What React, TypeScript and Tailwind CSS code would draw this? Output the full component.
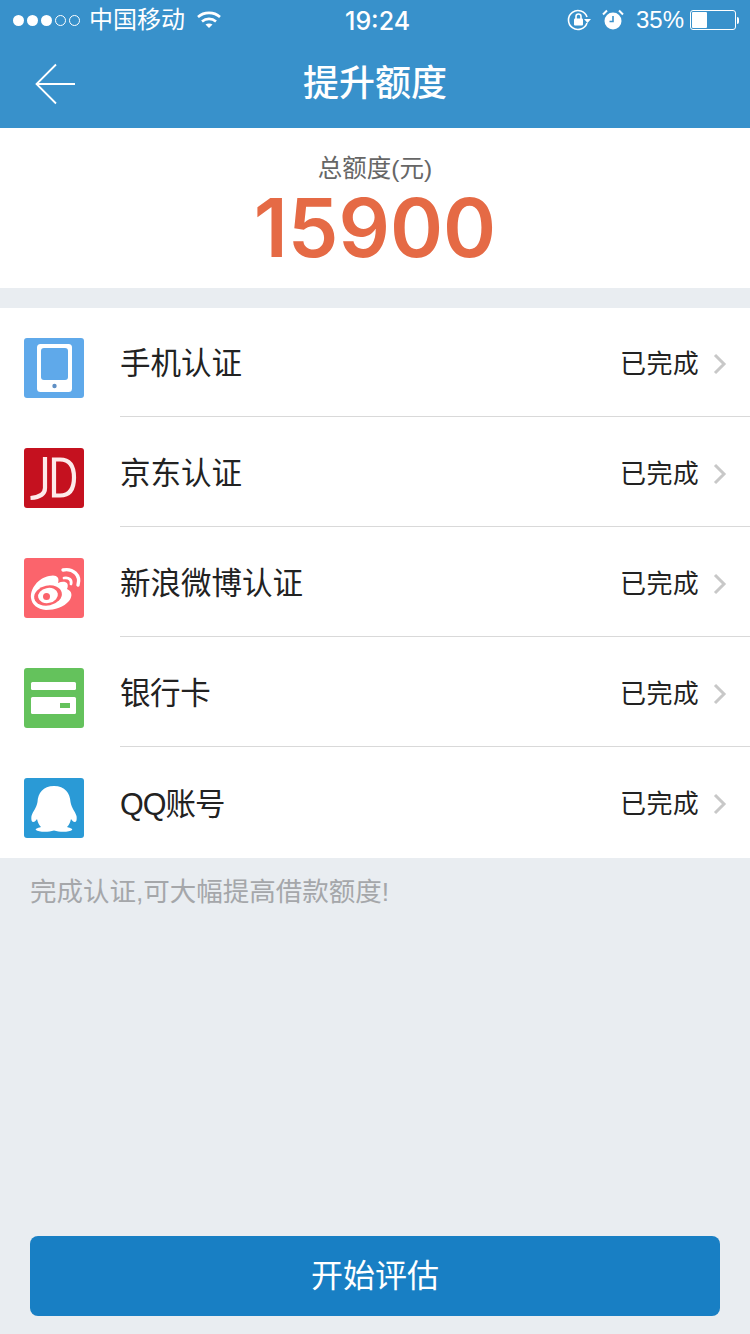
import type { ReactNode } from "react";

const cjk = "font-['Helvetica_Neue','Liberation_Sans','Noto_Sans_CJK_SC',sans-serif]";

function PhoneIcon() {
  return (
    <svg viewBox="0 0 60 60" className="h-[60px] w-[60px]">
      <rect width="60" height="60" rx="3" fill="#5fa9ea" />
      <rect x="13" y="6" width="35" height="48" rx="3.5" fill="#fff" />
      <rect x="17" y="10" width="27" height="32" rx="3" fill="#5fa9ea" />
      <circle cx="30.5" cy="48" r="2.2" fill="#5f8fc4" />
    </svg>
  );
}

function JdIcon() {
  return (
    <svg viewBox="0 0 60 60" className="h-[60px] w-[60px]">
      <rect width="60" height="60" rx="3" fill="#c5111f" />
      <path d="M21 9V40Q21 49 6.5 50" fill="none" stroke="#fdeaea" strokeWidth="4.2" />
      <path d="M30 11.5H36Q50 11.5 50 29.5T36 47.5H30Z" fill="none" stroke="#fdeaea" strokeWidth="4.2" />
    </svg>
  );
}

function WeiboIcon() {
  return (
    <svg viewBox="0 0 60 60" className="h-[60px] w-[60px]">
      <rect width="60" height="60" rx="3" fill="#fb646c" />
      <path
        d="M7 40C6 31 14 20 25 18C32 16 36 19 34 25C40 22 46 24 43 31C48 33 49 38 45 43C40 49 31 52 22 52C13 51 8 47 7 40Z"
        fill="#fff"
      />
      <ellipse cx="24" cy="37.5" rx="14" ry="10" fill="#fb646c" transform="rotate(-12 24 37.5)" />
      <ellipse cx="24" cy="37.5" rx="10" ry="7.5" fill="#fff" transform="rotate(-12 24 37.5)" />
      <circle cx="22.5" cy="38.5" r="3.5" fill="#fb646c" />
      <path d="M40 20C45 19 48 22 47 26" fill="none" stroke="#fff" strokeWidth="2.8" strokeLinecap="round" />
      <path d="M39 12C49 10 57 17 54 27" fill="none" stroke="#fff" strokeWidth="3.4" strokeLinecap="round" />
    </svg>
  );
}

function CardIcon() {
  return (
    <svg viewBox="0 0 60 60" className="h-[60px] w-[60px]">
      <rect width="60" height="60" rx="3" fill="#64c25c" />
      <rect x="7" y="14" width="45" height="8" rx="1.5" fill="#fff" />
      <rect x="7" y="29" width="45" height="17" rx="1.5" fill="#fff" />
      <rect x="36" y="35" width="10" height="5" fill="#64c25c" />
    </svg>
  );
}

function QqIcon() {
  return (
    <svg viewBox="0 0 60 60" className="h-[60px] w-[60px]">
      <rect width="60" height="60" rx="3" fill="#2a9ad6" />
      <path
        d="M30 8C19 8 14 15 13.5 24C12.5 30 9 33 7.5 38C7 41 7.5 44 9 44C11 44 12 42 13 41C14 45 15 47 17 49C13 50 11 51 12 52C14 54 24 54.5 30 52.5C36 54.5 46 54 48 52C49 51 47 50 43 49C45 47 46 45 47 41C48 42 49 44 51 44C52.5 44 53 41 52.5 38C51 33 47.5 30 46.5 24C46 15 41 8 30 8Z"
        fill="#fff"
      />
    </svg>
  );
}

function StatusBar() {
  return (
    <div className="relative flex h-10 items-center text-white">
      <div className="ml-[13px] flex items-center gap-[3px]">
        {[0, 1, 2].map((i) => (
          <span key={i} className="h-[11px] w-[11px] rounded-full bg-white" />
        ))}
        {[0, 1].map((i) => (
          <span key={i} className="h-[11px] w-[11px] rounded-full border border-white" />
        ))}
      </div>
      <span className="ml-[9px] text-[24px] leading-none">中国移动</span>
      <svg viewBox="0 0 26 20" className="ml-[11px] h-[20px] w-[26px]" fill="none" stroke="#fff" strokeWidth="2.6">
        <path d="M2 7C8 1.5 18 1.5 24 7" />
        <path d="M6 11.5C10 8 16 8 20 11.5" />
        <path d="M13 18L9.5 14.5C11.5 13 14.5 13 16.5 14.5Z" fill="#fff" stroke="none" />
      </svg>
      <span className="absolute left-[345px] top-[7px] font-['Inter',sans-serif] text-[25px] font-medium leading-[28px]">19:24</span>
      <div className="ml-auto mr-[11px] flex items-center">
        <svg viewBox="0 0 24 24" className="h-[24px] w-[24px]" fill="none" stroke="#fff" strokeWidth="1.6">
          <path d="M20 15A9.5 9.5 0 1 1 20 9" />
          <path d="M17 11H24L20.5 15Z" fill="#fff" stroke="none" />
          <rect x="7" y="10.5" width="9" height="7" rx="1" fill="#fff" stroke="none" />
          <path d="M9 11V8.5A2.5 2.5 0 0 1 14 8.5V11" />
        </svg>
        <svg viewBox="0 0 22 22" className="ml-[11px] h-[22px] w-[22px]">
          <circle cx="11" cy="12" r="8.5" fill="#fff" />
          <path d="M11 7V12.5H7.5" fill="none" stroke="#3891cb" strokeWidth="1.6" />
          <path d="M1 5.5L5 1.5M21 5.5L17 1.5" stroke="#fff" strokeWidth="2" />
        </svg>
        <span className="ml-[12px] text-[24px] leading-none">35%</span>
        <div className="ml-[6px] flex h-[20px] w-[46px] items-center rounded-[3px] border border-white p-[1px]">
          <div className="h-full w-[15px] rounded-[1px] bg-white" />
        </div>
        <div className="ml-[1px] h-[7px] w-[2px] rounded-r-sm bg-white" />
      </div>
    </div>
  );
}

function Row({ icon, name, last, nameClass }: { icon: ReactNode; name: string; last?: boolean; nameClass?: string }) {
  return (
    <div className="flex h-[110px] items-start">
      <div className="w-[120px] shrink-0 pl-6 pt-[30px]">{icon}</div>
      <div className={`flex h-[109px] min-w-0 flex-1 items-center pt-[3px] ${last ? "" : "border-b border-[#d9d9d9]"}`}>
        <span className={`flex-1 text-[30.5px] leading-none text-[#222] ${nameClass ?? ""}`}>{name}</span>
        <span className="text-[26px] leading-none tracking-[0.3px] text-[#222]">已完成</span>
        <svg viewBox="0 0 14 22" className="ml-[14px] mr-[23px] h-[22px] w-[14px]" fill="none" stroke="#c8c8c8" strokeWidth="3">
          <path d="M2 2L11 11L2 20" />
        </svg>
      </div>
    </div>
  );
}

export default function App() {
  return (
    <div className={`flex h-[1334px] w-[750px] flex-col overflow-hidden bg-[#e9edf1] ${cjk}`}>
      <header className="h-[128px] bg-[#3891cb]">
        <StatusBar />
        <div className="relative flex h-[88px] items-center justify-center">
          <svg viewBox="0 0 42 42" className="absolute left-[35px] top-[23px] h-[42px] w-[42px]" fill="none" stroke="#fff" strokeWidth="1.8">
            <path d="M1.5 21H40" />
            <path d="M21 1.5L1.5 21L21 40.5" />
          </svg>
          <h1 className="text-[36px] font-medium leading-none text-white">提升额度</h1>
        </div>
      </header>

      <section className="flex h-[160px] flex-col items-center bg-white pt-[26px]">
        <div className="text-[24.5px] leading-[30px] text-[#666]">总额度(元)</div>
        <div className="mt-[1px] font-['Inter',sans-serif] text-[80.5px] font-semibold leading-[86px] text-[#e56a45]">15900</div>
      </section>

      <section className="mt-5 bg-white">
        <Row icon={<PhoneIcon />} name="手机认证" />
        <Row icon={<JdIcon />} name="京东认证" />
        <Row icon={<WeiboIcon />} name="新浪微博认证" />
        <Row icon={<CardIcon />} name="银行卡" nameClass="tracking-[-0.4px]" />
        <Row icon={<QqIcon />} name="QQ账号" last nameClass="tracking-[-1px]" />
      </section>

      <p className="ml-[30px] mt-[19px] text-[26.5px] leading-[30px] text-[#a5a7aa]">完成认证,可大幅提高借款额度!</p>

      <button className="mx-[30px] mb-[18px] mt-auto h-[80px] rounded-lg bg-[#187fc4] text-[32px] text-white">开始评估</button>
    </div>
  );
}
